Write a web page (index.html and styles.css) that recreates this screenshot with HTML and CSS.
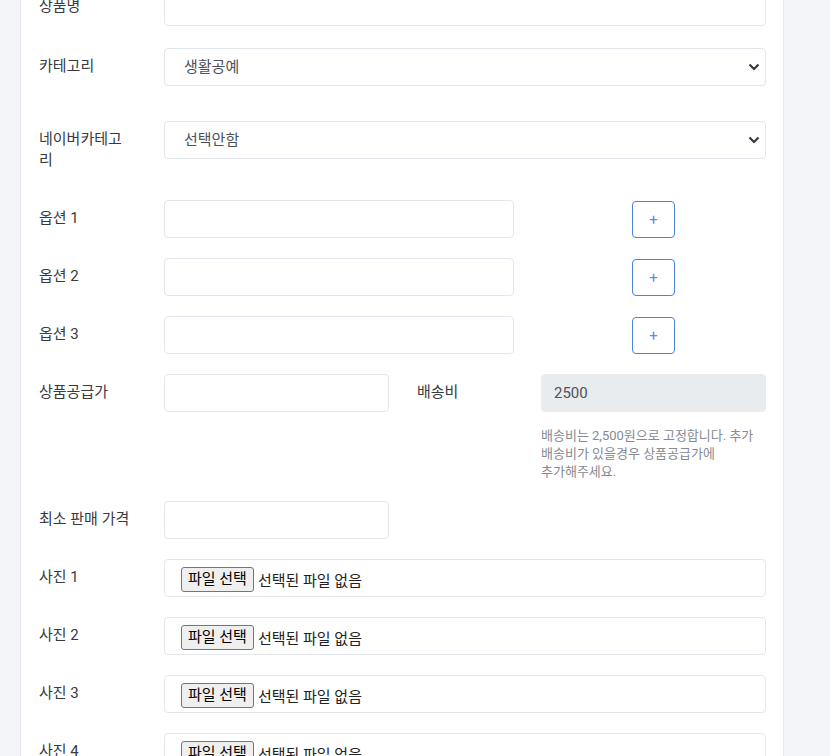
FILE: index.html
```html
<!DOCTYPE html>
<html lang="ko">
<head>
  <meta charset="UTF-8">
  <meta name="viewport" content="width=device-width, initial-scale=1.0">
  <title>상품 등록</title>
  <link rel="stylesheet" href="styles.css">
</head>
<body>
  <div class="card">
    <form id="productForm" class="product-form">
      <div class="form-row form-row-first">
        <label class="form-label" for="name">상품명</label>
        <input class="form-input" type="text" id="name" name="name">
      </div>

      <div class="form-row form-row-spaced">
        <label class="form-label" for="category">카테고리</label>
        <div class="select-wrap">
          <select class="form-select" id="category" name="category">
            <option>생활공예</option>
            <option>주방용품</option>
            <option>인테리어</option>
          </select>
          <svg class="select-arrow" width="12" height="8" viewBox="0 0 12 8"><path d="M1.5 1.5 6 6l4.5-4.5" fill="none" stroke="#343a40" stroke-width="2.2"/></svg>
        </div>
      </div>

      <div class="form-row">
        <label class="form-label" for="naverCategory">네이버카테고리</label>
        <div class="select-wrap">
          <select class="form-select" id="naverCategory" name="naverCategory">
            <option>선택안함</option>
          </select>
          <svg class="select-arrow" width="12" height="8" viewBox="0 0 12 8"><path d="M1.5 1.5 6 6l4.5-4.5" fill="none" stroke="#343a40" stroke-width="2.2"/></svg>
        </div>
      </div>

      <div class="form-row form-row-option">
        <label class="form-label" for="option1">옵션 1</label>
        <input class="form-input" type="text" id="option1" name="option1">
        <button type="button" class="btn-add">+</button>
      </div>

      <div class="form-row form-row-option">
        <label class="form-label" for="option2">옵션 2</label>
        <input class="form-input" type="text" id="option2" name="option2">
        <button type="button" class="btn-add">+</button>
      </div>

      <div class="form-row form-row-option">
        <label class="form-label" for="option3">옵션 3</label>
        <input class="form-input" type="text" id="option3" name="option3">
        <button type="button" class="btn-add">+</button>
      </div>

      <div class="form-row form-row-price">
        <label class="form-label" for="supplyPrice">상품공급가</label>
        <input class="form-input input-short" type="text" id="supplyPrice" name="supplyPrice">
        <label class="form-label" for="delivery">배송비</label>
        <div>
          <input class="form-input input-readonly" type="text" id="delivery" name="delivery" value="2500" readonly>
          <p class="form-help">배송비는 2,500원으로 고정합니다. 추가 배송비가 있을경우 상품공급가에 추가해주세요.</p>
        </div>
      </div>

      <div class="form-row">
        <label class="form-label" for="minPrice">최소 판매 가격</label>
        <input class="form-input input-short" type="text" id="minPrice" name="minPrice">
      </div>

      <div class="form-row">
        <span class="form-label">사진 1</span>
        <label class="file-box"><input type="file" name="photo1" class="hidden"><span class="file-btn">파일 선택</span><span class="file-name">선택된 파일 없음</span></label>
      </div>

      <div class="form-row">
        <span class="form-label">사진 2</span>
        <label class="file-box"><input type="file" name="photo2" class="hidden"><span class="file-btn">파일 선택</span><span class="file-name">선택된 파일 없음</span></label>
      </div>

      <div class="form-row">
        <span class="form-label">사진 3</span>
        <label class="file-box"><input type="file" name="photo3" class="hidden"><span class="file-btn">파일 선택</span><span class="file-name">선택된 파일 없음</span></label>
      </div>

      <div class="form-row">
        <span class="form-label">사진 4</span>
        <label class="file-box"><input type="file" name="photo4" class="hidden"><span class="file-btn">파일 선택</span><span class="file-name">선택된 파일 없음</span></label>
      </div>
    </form>
  </div>
</body>
</html>
```

FILE: styles.css
```css
html, body { height: 100%; }
body { margin: 0; background-color: #f4f5f9; font-family: Roboto, "Noto Sans CJK KR", sans-serif; font-size: 15px; color: #333; overflow: hidden; }
.card { width: 727px; margin: -12px 0 0 20px; padding: 0 17px 40px 18px; background-color: #fff; border-left: 1px solid #e6e8ee; border-right: 1px solid #e6e8ee; }
.product-form { margin: 0; }
.hidden { display: none; }

.form-row { display: grid; grid-template-columns: 125px 1fr; align-items: start; margin-bottom: 20px; }
.form-row-first { margin-bottom: 22px; }
.form-row-spaced { margin-bottom: 35px; }
.form-row-option { grid-template-columns: 125px 350px 1fr; }
.form-row-price { grid-template-columns: 125px 253px 124px 1fr; }

.form-label { display: block; padding: 8px 29px 9px 0; line-height: 21px; color: #383a3f; }

.form-input, .form-select { box-sizing: border-box; width: 100%; height: 38px; margin: 0; padding: 6px 12px; font: inherit; color: #4d5259; background-color: #fff; border: 1px solid #e3e6ec; border-radius: 4px; outline: none; }
.input-short { width: 225px; }
.input-readonly { background-color: #e9ecef; border-color: #e9ecef; }

.select-wrap { position: relative; }
.form-select { appearance: none; -webkit-appearance: none; padding-left: 19px; }
.select-arrow { position: absolute; right: 6px; top: 15px; pointer-events: none; }

.btn-add { justify-self: center; width: 43px; height: 37px; margin: 1px 0 0 27px; padding: 0; font: 15px Roboto, sans-serif; color: #7083e3; background-color: #fff; border: 1px solid #4c82dc; border-radius: 4px; cursor: pointer; }

.form-help { margin: 15px 0 0; font-size: 13px; line-height: 18px; color: #858a93; word-break: keep-all; }

.file-box { box-sizing: border-box; display: flex; align-items: center; height: 38px; padding: 3px 16px 0; border: 1px solid #e3e6ec; border-radius: 4px; cursor: pointer; }
.file-btn { box-sizing: border-box; height: 25px; padding: 1px 6px; line-height: 21px; color: #000; background-color: #efefef; border: 1px solid #767676; border-radius: 3px; }
.file-name { margin-left: 4px; color: #222; }
```
